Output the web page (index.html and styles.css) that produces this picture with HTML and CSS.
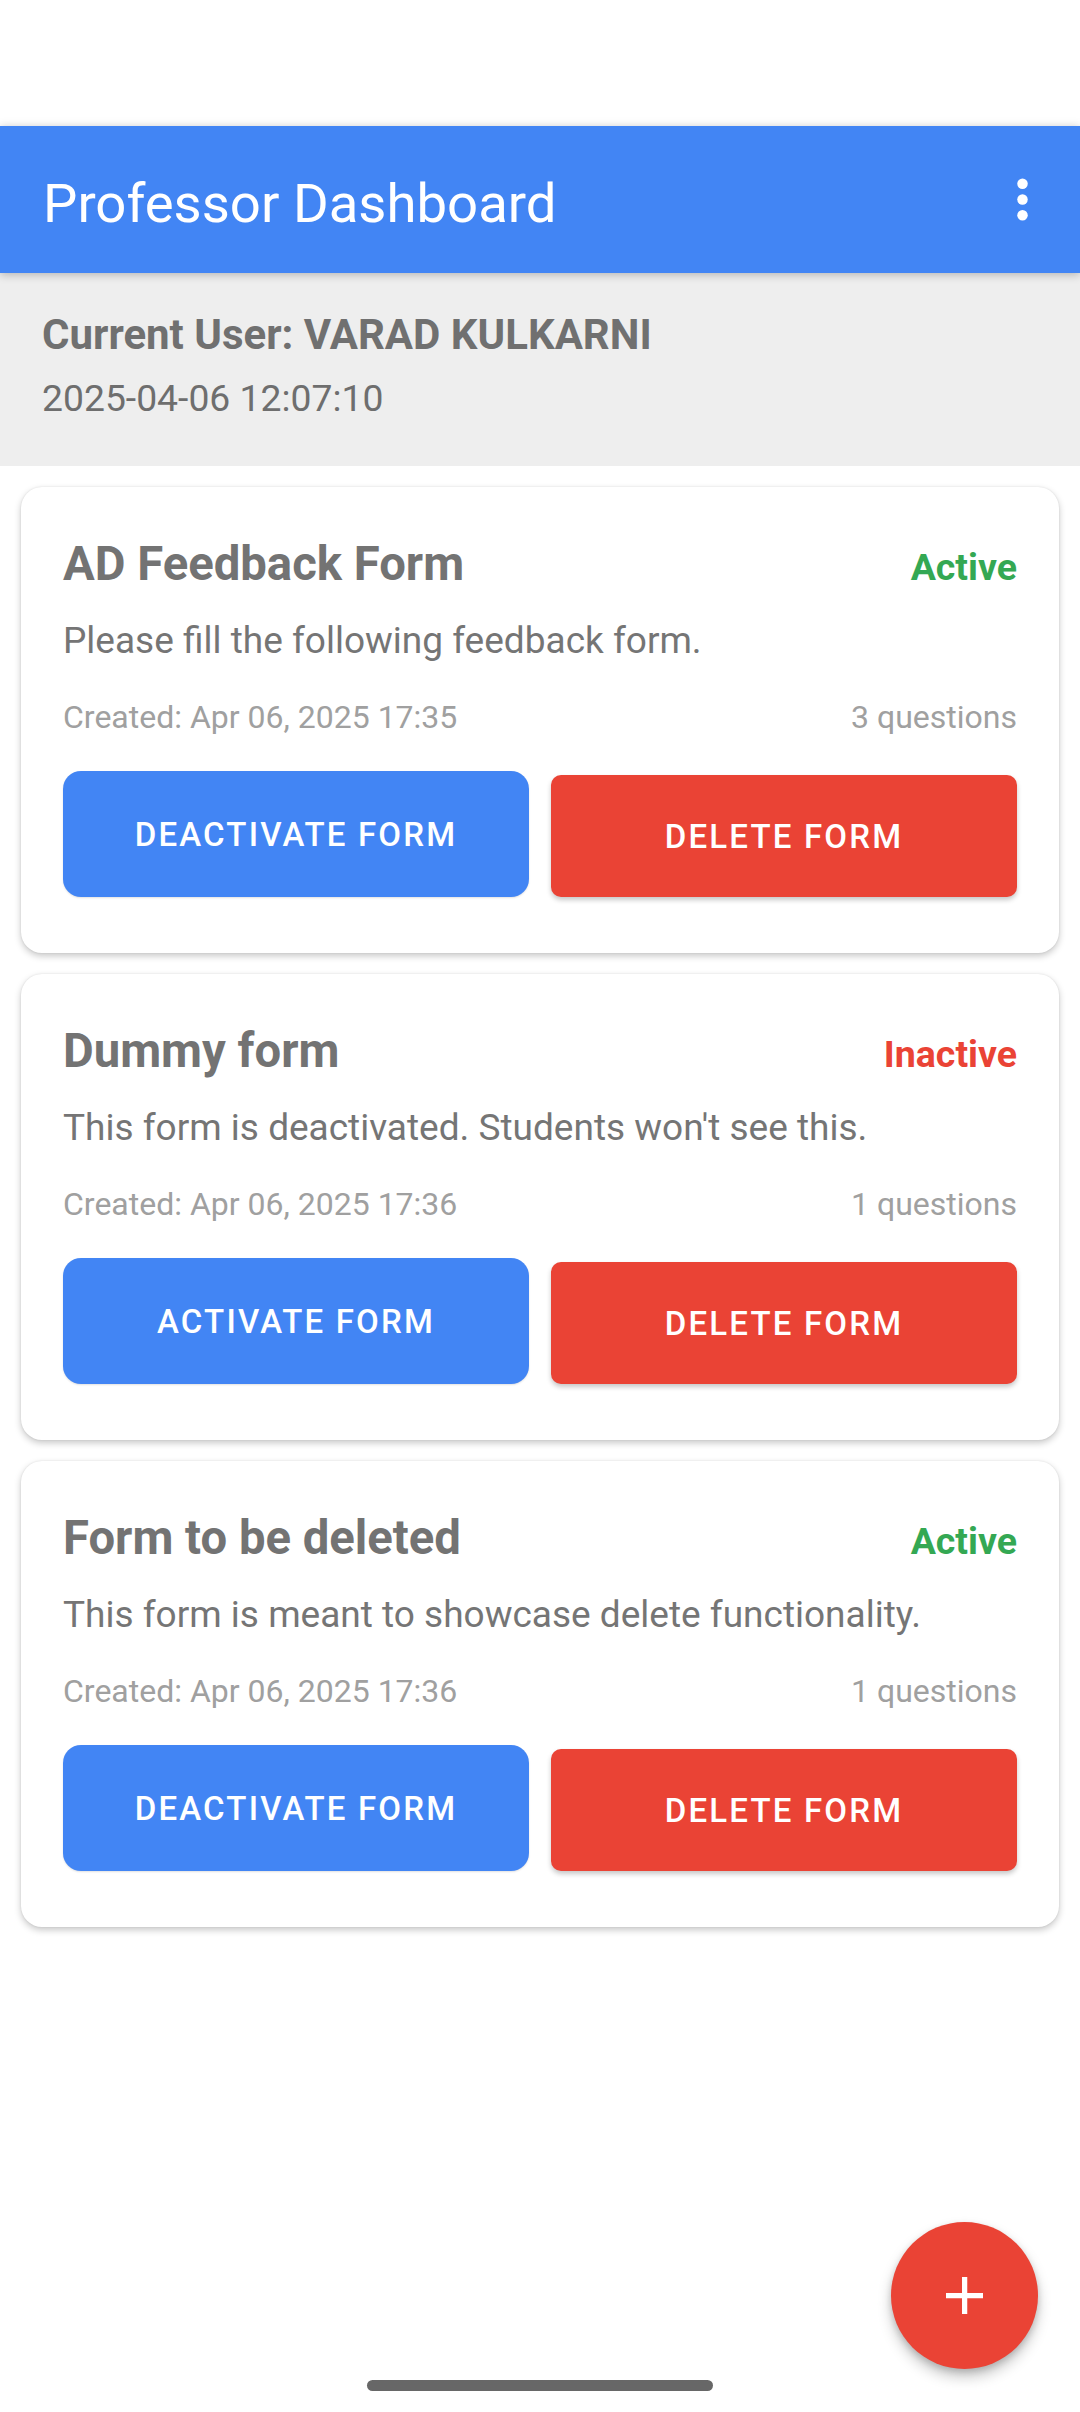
FILE: index.html
```html
<!DOCTYPE html>
<html lang="en">
<head>
<meta charset="utf-8">
<title>Professor Dashboard</title>
<link rel="stylesheet" href="styles.css">
</head>
<body>
<div class="screen">
  <div class="status-bar"></div>
  <header class="app-bar">
    <h1 class="app-title">Professor Dashboard</h1>
    <button class="overflow" aria-label="More options">
      <svg width="63" height="63" viewBox="0 0 24 24"><circle cx="12" cy="6" r="2" fill="#fff"/><circle cx="12" cy="12" r="2" fill="#fff"/><circle cx="12" cy="18" r="2" fill="#fff"/></svg>
    </button>
  </header>
  <section class="user-info">
    <div class="user-name">Current User: VARAD KULKARNI</div>
    <div class="user-time">2025-04-06 12:07:10</div>
  </section>

  <main class="form-list">
    <article class="card">
      <div class="card-head">
        <h2 class="card-title">AD Feedback Form</h2>
        <span class="status status-active">Active</span>
      </div>
      <p class="card-desc">Please fill the following feedback form.</p>
      <div class="card-meta">
        <span>Created: Apr 06, 2025 17:35</span>
        <span>3 questions</span>
      </div>
      <div class="card-actions">
        <button class="btn btn-toggle">DEACTIVATE FORM</button>
        <button class="btn btn-delete">DELETE FORM</button>
      </div>
    </article>

    <article class="card">
      <div class="card-head">
        <h2 class="card-title">Dummy form</h2>
        <span class="status status-inactive">Inactive</span>
      </div>
      <p class="card-desc">This form is deactivated. Students won't see this.</p>
      <div class="card-meta">
        <span>Created: Apr 06, 2025 17:36</span>
        <span>1 questions</span>
      </div>
      <div class="card-actions">
        <button class="btn btn-toggle">ACTIVATE FORM</button>
        <button class="btn btn-delete">DELETE FORM</button>
      </div>
    </article>

    <article class="card">
      <div class="card-head">
        <h2 class="card-title">Form to be deleted</h2>
        <span class="status status-active">Active</span>
      </div>
      <p class="card-desc">This form is meant to showcase delete functionality.</p>
      <div class="card-meta">
        <span>Created: Apr 06, 2025 17:36</span>
        <span>1 questions</span>
      </div>
      <div class="card-actions">
        <button class="btn btn-toggle">DEACTIVATE FORM</button>
        <button class="btn btn-delete">DELETE FORM</button>
      </div>
    </article>
  </main>

  <button class="fab" aria-label="Add form">
    <svg width="37" height="37" viewBox="0 0 37 37"><rect x="16" y="0" width="5.25" height="37" fill="#fff"/><rect x="0" y="16" width="37" height="5.25" fill="#fff"/></svg>
  </button>
  <div class="nav-handle"></div>
</div>
</body>
</html>
```

FILE: styles.css
```css
* { box-sizing: border-box; }

html, body {
  margin: 0;
  padding: 0;
  background: #ffffff;
  font-family: Roboto, "Noto Sans", "Liberation Sans", sans-serif;
}

.screen {
  position: relative;
  width: 1080px;
  height: 2412px;
  overflow: hidden;
  background: #ffffff;
}

.status-bar {
  height: 126px;
  background: #ffffff;
}

.app-bar {
  position: relative;
  z-index: 2;
  height: 147px;
  background: #4285f4;
  display: flex;
  align-items: center;
  justify-content: space-between;
  padding: 0 26px 0 43px;
  box-shadow: 0 3px 8px rgba(0, 0, 0, 0.18), 0 -2px 8px rgba(0, 0, 0, 0.08);
}

.app-title {
  margin: 0;
  padding-top: 7px;
  font-size: 54.5px;
  line-height: 62px;
  font-weight: 400;
  color: #ffffff;
}

.overflow {
  display: flex;
  width: 63px;
  height: 63px;
  padding: 0;
  border: 0;
  background: transparent;
}

.user-info {
  position: relative;
  z-index: 1;
  background: #eeeeee;
  height: 193px;
  padding: 39px 42px 0;
}

.user-name {
  font-size: 42px;
  line-height: 46px;
  font-weight: 700;
  color: #707070;
}

.user-time {
  margin-top: 19px;
  font-size: 37.3px;
  line-height: 43px;
  color: #6e6e6e;
}

.form-list {
  display: flex;
  flex-direction: column;
  gap: 21px;
  padding: 21px 21px 0;
}

.card {
  height: 466px;
  background: #ffffff;
  border-radius: 21px;
  padding: 50px 42px 0;
  box-shadow: 0 3px 7px rgba(0, 0, 0, 0.22), 0 0 2px rgba(0, 0, 0, 0.1);
}

.card-head {
  display: flex;
  justify-content: space-between;
  align-items: baseline;
  height: 54px;
}

.card-title {
  margin: 0;
  font-size: 47.25px;
  line-height: 54px;
  font-weight: 700;
  color: #737373;
}

.status {
  font-size: 37.5px;
  line-height: 43px;
  font-weight: 700;
}

.status-active { color: #34a853; }
.status-inactive { color: #ea4335; }

.card-desc {
  margin: 27.6px 0 0;
  font-size: 37px;
  line-height: 43px;
  color: #757575;
}

.card-meta {
  margin-top: 37.4px;
  display: flex;
  justify-content: space-between;
  font-size: 32px;
  line-height: 37px;
  color: #a0a0a0;
}

.card-actions {
  margin-top: 35px;
  height: 126px;
  display: flex;
  align-items: flex-end;
  gap: 22px;
}

.btn {
  flex: 1 1 0;
  border: 0;
  padding: 2px 0 0;
  font-family: Roboto, "Noto Sans", "Liberation Sans", sans-serif;
  font-size: 33px;
  line-height: 39px;
  font-weight: 500;
  letter-spacing: 0.066em;
  color: #ffffff;
  display: flex;
  align-items: center;
  justify-content: center;
}

.btn-toggle {
  height: 126px;
  background: #4285f4;
  border-radius: 18px;
  box-shadow: 0 1px 2px rgba(0, 0, 0, 0.12);
}

.btn-delete {
  height: 122px;
  background: #ea4335;
  border-radius: 10px;
  box-shadow: 0 3px 5px rgba(0, 0, 0, 0.22);
}

.fab {
  position: absolute;
  right: 42px;
  bottom: 43px;
  width: 147px;
  height: 147px;
  border: 0;
  padding: 0;
  border-radius: 50%;
  background: #ea4335;
  display: flex;
  align-items: center;
  justify-content: center;
  box-shadow: 0 8px 14px rgba(0, 0, 0, 0.22), 0 3px 6px rgba(0, 0, 0, 0.15);
}

.nav-handle {
  position: absolute;
  left: 367px;
  bottom: 21px;
  width: 346px;
  height: 11px;
  border-radius: 6px;
  background: #676767;
}
```
